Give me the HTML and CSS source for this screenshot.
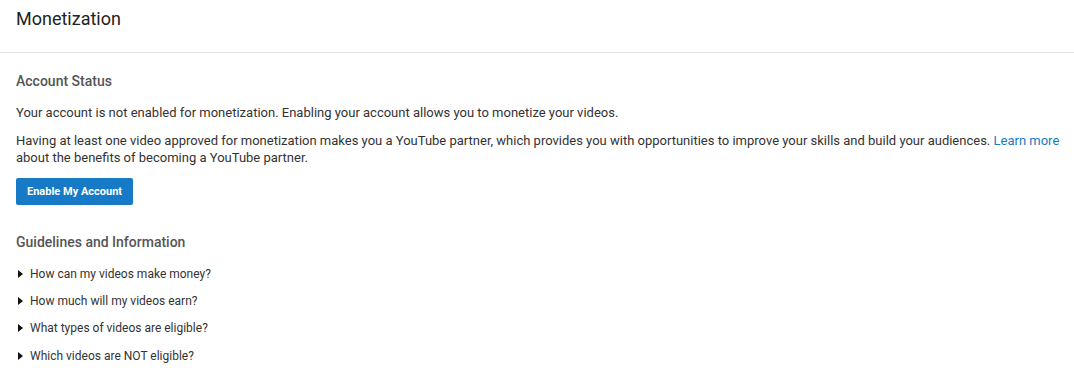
FILE: index.html
```html
<!DOCTYPE html>
<html>
<head>
<meta charset="utf-8">
<link rel="stylesheet" href="styles.css">
</head>
<body>
<header class="page-header">
  <h1 class="page-title">Monetization</h1>
</header>
<main class="content">
  <section class="section">
    <h2 class="section-title">Account Status</h2>
    <p class="text">Your account is not enabled for monetization. Enabling your account allows you to monetize your videos.</p>
    <p class="text">Having at least one video approved for monetization makes you a YouTube partner, which provides you with opportunities to improve your skills and build your audiences. <a class="link" href="#">Learn more</a> about the benefits of becoming a YouTube partner.</p>
    <button class="btn-primary">Enable My Account</button>
  </section>
  <section class="section guidelines">
    <h2 class="section-title">Guidelines and Information</h2>
    <ul class="faq">
      <li class="faq-item"><span class="arrow"></span>How can my videos make money?</li>
      <li class="faq-item"><span class="arrow"></span>How much will my videos earn?</li>
      <li class="faq-item"><span class="arrow"></span>What types of videos are eligible?</li>
      <li class="faq-item"><span class="arrow"></span>Which videos are NOT eligible?</li>
    </ul>
  </section>
</main>
</body>
</html>
```
FILE: styles.css
```css
* { box-sizing: border-box; }
html, body { margin: 0; padding: 0; background: #fff; }
body { font-family: Roboto, "Liberation Sans", Arial, sans-serif; color: #333; }
.page-header {
  height: 53px;
  border-bottom: 1px solid #e2e2e2;
  padding: 7px 16px 0;
}
.page-title {
  margin: 0;
  font-size: 18px;
  font-weight: 400;
  color: #222;
  line-height: 24px;
}
.content { padding: 19px 8px 0 16px; }
.section-title {
  margin: 0 0 14px;
  font-size: 14px;
  font-weight: 500;
  color: #555;
  line-height: 18px;
}
.text {
  margin: 0 0 11px;
  font-size: 13px;
  line-height: 17px;
  color: #333;
}
.link { color: #167ac6; text-decoration: none; }
.btn-primary {
  display: block;
  margin: 12px 0 0;
  height: 27px;
  padding: 0 11px;
  border: 0;
  border-radius: 2px;
  background: #167ac6;
  color: #fff;
  font-family: Roboto, "Liberation Sans", Arial, sans-serif;
  font-size: 11px;
  font-weight: 700;
  white-space: nowrap;
  width: 117px;
}
.guidelines { margin-top: 28px; }
.guidelines .section-title { margin-bottom: 9px; }
.faq { list-style: none; margin: 0; padding: 0; }
.faq-item {
  display: flex;
  align-items: center;
  font-size: 12px;
  color: #333;
  line-height: 16px;
  height: 27.3px;
}
.arrow {
  width: 0; height: 0;
  border-top: 4.5px solid transparent;
  border-bottom: 4.5px solid transparent;
  border-left: 5px solid #111;
  margin: 0 7px 0 2px;
}
```
